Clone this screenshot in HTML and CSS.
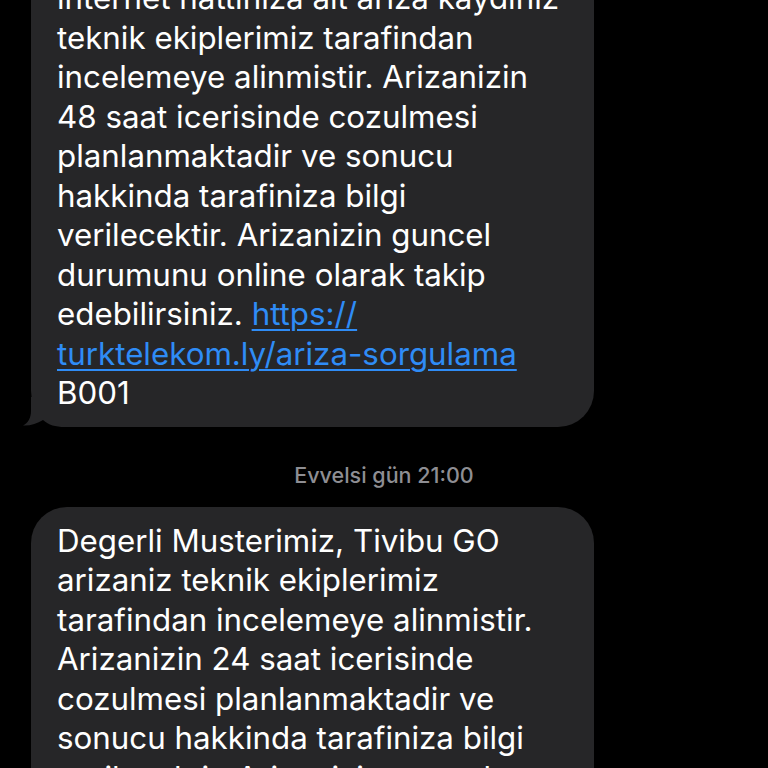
FILE: index.html
```html
<!DOCTYPE html>
<html>
<head>
<meta charset="utf-8">
<link rel="stylesheet" href="styles.css">
</head>
<body>
<div class="thread">
  <div class="bubble tailed">
    <svg class="tail" width="50" height="30" viewBox="0 0 50 30"><path d="M8 0 L8 14 C8 21 5 26 0 28.5 C7 29 14 26.5 20 23 C26 28 32 30 42 30 L50 30 L50 0 Z" fill="#262628"/></svg>
    <p class="msg">internet hattiniza ait ariza kaydiniz<br>teknik ekiplerimiz tarafindan<br>incelemeye alinmistir. Arizanizin<br>48 saat icerisinde cozulmesi<br>planlanmaktadir ve sonucu<br>hakkinda tarafiniza bilgi<br>verilecektir. Arizanizin guncel<br>durumunu online olarak takip<br>edebilirsiniz. <a class="link" href="#">https://<br>turktelekom.ly/ariza-sorgulama</a><br>B001</p>
  </div>
  <div class="stamp">Evvelsi gün 21:00</div>
  <div class="bubble">
    <p class="msg">Degerli Musterimiz, Tivibu GO<br>arizaniz teknik ekiplerimiz<br>tarafindan incelemeye alinmistir.<br>Arizanizin 24 saat icerisinde<br>cozulmesi planlanmaktadir ve<br>sonucu hakkinda tarafiniza bilgi<br>verilecektir. Arizanizin guncel<br>durumunu online olarak takip<br>edebilirsiniz.</p>
  </div>
</div>
</body>
</html>
```
FILE: styles.css
```css
html, body {
  margin: 0;
  padding: 0;
  background: #000;
}
body {
  width: 768px;
  height: 768px;
  overflow: hidden;
  font-family: Inter, "Liberation Sans", sans-serif;
}
.thread {
  margin-top: -36px;
  display: flex;
  flex-direction: column;
  align-items: flex-start;
}
.bubble {
  position: relative;
  margin-left: 31px;
  width: 563px;
  box-sizing: border-box;
  background: #262628;
  border-radius: 36px;
  padding: 15px 20px 13px 26px;
}
.msg {
  position: relative;
  z-index: 1;
  margin: 0;
  color: #fff;
  font-size: 31.3px;
  line-height: 39.5px;
  white-space: nowrap;
}
.link {
  color: #2f8cf6;
  text-decoration: underline;
  text-decoration-thickness: 2px;
  text-underline-offset: 4px;
}
.tail {
  position: absolute;
  z-index: 0;
  left: -8px;
  bottom: 0;
}
.stamp {
  align-self: stretch;
  text-align: center;
  color: #8e8e93;
  font-size: 21.5px;
  font-weight: 500;
  line-height: 26px;
  margin: 35px 0 19px 0;
}
```
